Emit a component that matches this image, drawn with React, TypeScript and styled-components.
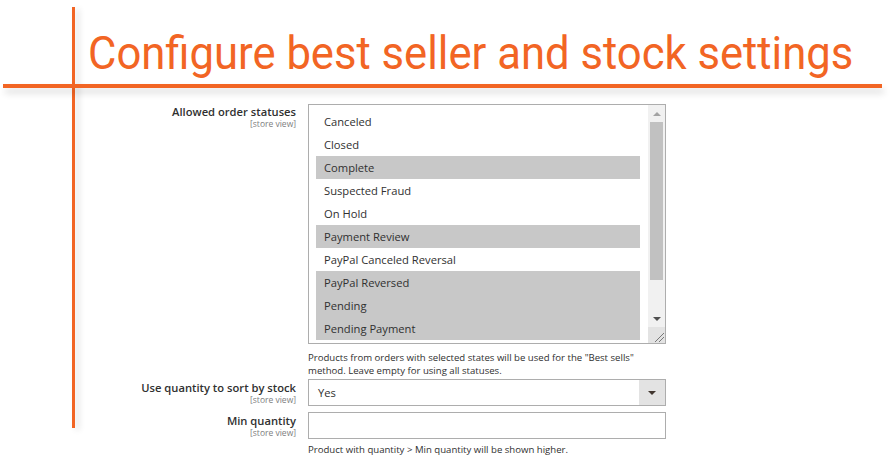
import React from 'react';
import styled, { createGlobalStyle } from 'styled-components';

const GlobalStyle = createGlobalStyle`
  html, body {
    margin: 0;
    padding: 0;
    background: #ffffff;
  }
  body {
    font-family: 'Open Sans', 'Liberation Sans', sans-serif;
    color: #303030;
  }
`;

const ORANGE = '#f26524';

const Canvas = styled.div`
  position: relative;
  width: 892px;
  height: 468px;
  overflow: hidden;
  background: #fff;
`;

// decorative guide lines laid over the page
const VLine = styled.div`
  position: absolute;
  left: 72px;
  top: 7px;
  width: 3px;
  height: 421px;
  background: ${ORANGE};
  box-shadow: 4px 2px 6px rgba(0, 0, 0, 0.14);
  z-index: 2;
`;

const HLine = styled.div`
  position: absolute;
  left: 3px;
  top: 84px;
  width: 879px;
  height: 4px;
  background: ${ORANGE};
  box-shadow: 2px 5px 7px rgba(0, 0, 0, 0.16);
  z-index: 2;
`;

const Header = styled.div`
  height: 104px;
  padding: 29px 0 0 88px;
  box-sizing: border-box;
`;

const Title = styled.h1`
  display: inline-block;
  margin: 0;
  font-family: Roboto, 'Liberation Sans', sans-serif;
  font-weight: 400;
  font-size: 47px;
  line-height: 1;
  color: ${ORANGE};
  white-space: nowrap;
  transform: scaleX(0.928);
  transform-origin: left top;
`;

const Form = styled.div`
  display: flex;
  flex-direction: column;
`;

const Row = styled.div<{ $gap?: number }>`
  display: grid;
  grid-template-columns: 296px 358px;
  column-gap: 12px;
  margin-bottom: ${(p) => p.$gap ?? 0}px;
`;

const LabelCell = styled.div<{ $top?: number }>`
  text-align: right;
  padding-top: ${(p) => p.$top ?? 0}px;
`;

const LabelText = styled.div`
  font-size: 11.2px;
  font-weight: 600;
  line-height: 13px;
  color: #303030;
`;

const Scope = styled.div`
  font-size: 8.5px;
  line-height: 11px;
  color: #808080;
`;

const Control = styled.div`
  display: flex;
  flex-direction: column;
`;

const ListBox = styled.div`
  display: flex;
  height: 240px;
  border: 1px solid #adadad;
  box-sizing: border-box;
  overflow: hidden;
`;

const Options = styled.div`
  flex: 1;
  padding: 5px 8px 0 7px;
  overflow: hidden;
`;

const Option = styled.div<{ $selected?: boolean }>`
  height: 23px;
  line-height: 23px;
  padding-left: 8px;
  font-size: 11.2px;
  color: #303030;
  background: ${(p) => (p.$selected ? '#c8c8c8' : 'transparent')};
  white-space: nowrap;
`;

const ScrollBar = styled.div`
  width: 17px;
  display: flex;
  flex-direction: column;
`;

const Track = styled.div`
  flex: 1;
  background: #f1f1f1;
  display: flex;
  flex-direction: column;
  align-items: center;
`;

const ArrowBox = styled.div`
  height: 17px;
  width: 100%;
  display: flex;
  align-items: center;
  justify-content: center;
`;

const Triangle = styled.div<{ $dir: 'up' | 'down'; $color: string }>`
  width: 0;
  height: 0;
  border-left: 4px solid transparent;
  border-right: 4px solid transparent;
  ${(p) =>
    p.$dir === 'up'
      ? `border-bottom: 4px solid ${p.$color};`
      : `border-top: 4px solid ${p.$color};`}
`;

const Thumb = styled.div`
  width: 13px;
  height: 158px;
  background: #c1c1c1;
`;

const Spacer = styled.div`
  flex: 1;
`;

const Resizer = styled.div`
  height: 16px;
  background: #e3e3e3;
  display: flex;
  align-items: flex-end;
  justify-content: flex-end;
`;

const Note = styled.div<{ $top: number }>`
  margin-top: ${(p) => p.$top}px;
  font-size: 9.6px;
  line-height: 13px;
  color: #303030;
`;

const SelectBox = styled.div`
  display: flex;
  height: 27px;
  border: 1px solid #adadad;
  box-sizing: border-box;
`;

const SelectValue = styled.div`
  flex: 1;
  padding-left: 9px;
  font-size: 11.2px;
  line-height: 25px;
  color: #303030;
`;

const SelectArrow = styled.div`
  width: 26px;
  background: #e3e3e3;
  display: flex;
  align-items: center;
  justify-content: center;
`;

const Input = styled.div`
  height: 27px;
  border: 1px solid #adadad;
  box-sizing: border-box;
  background: #fff;
`;

const statuses: [string, boolean][] = [
  ['Canceled', false],
  ['Closed', false],
  ['Complete', true],
  ['Suspected Fraud', false],
  ['On Hold', false],
  ['Payment Review', true],
  ['PayPal Canceled Reversal', false],
  ['PayPal Reversed', true],
  ['Pending', true],
  ['Pending Payment', true],
];

const App = () => (
  <Canvas>
    <GlobalStyle />
    <VLine />
    <HLine />
    <Header>
      <Title>Configure best seller and stock settings</Title>
    </Header>
    <Form>
      <Row $gap={2}>
        <LabelCell $top={1}>
          <LabelText>Allowed order statuses</LabelText>
          <Scope>[store view]</Scope>
        </LabelCell>
        <Control>
          <ListBox>
            <Options>
              {statuses.map(([name, selected]) => (
                <Option key={name} $selected={selected}>
                  {name}
                </Option>
              ))}
            </Options>
            <ScrollBar>
              <Track>
                <ArrowBox>
                  <Triangle $dir="up" $color="#a3a3a3" />
                </ArrowBox>
                <Thumb />
                <Spacer />
                <ArrowBox>
                  <Triangle $dir="down" $color="#505050" />
                </ArrowBox>
              </Track>
              <Resizer>
                <svg width="12" height="12" viewBox="0 0 12 12">
                  <path d="M2 11 L11 2 M6 11 L11 6" stroke="#777" strokeWidth="1" fill="none" />
                </svg>
              </Resizer>
            </ScrollBar>
          </ListBox>
          <Note $top={7}>
            Products from orders with selected states will be used for the "Best sells"
            <br />
            method. Leave empty for using all statuses.
          </Note>
        </Control>
      </Row>
      <Row $gap={6}>
        <LabelCell $top={2}>
          <LabelText>Use quantity to sort by stock</LabelText>
          <Scope>[store view]</Scope>
        </LabelCell>
        <Control>
          <SelectBox>
            <SelectValue>Yes</SelectValue>
            <SelectArrow>
              <Triangle $dir="down" $color="#41362f" />
            </SelectArrow>
          </SelectBox>
        </Control>
      </Row>
      <Row>
        <LabelCell $top={2}>
          <LabelText>Min quantity</LabelText>
          <Scope>[store view]</Scope>
        </LabelCell>
        <Control>
          <Input />
          <Note $top={4}>Product with quantity &gt; Min quantity will be shown higher.</Note>
        </Control>
      </Row>
    </Form>
  </Canvas>
);

export default App;
